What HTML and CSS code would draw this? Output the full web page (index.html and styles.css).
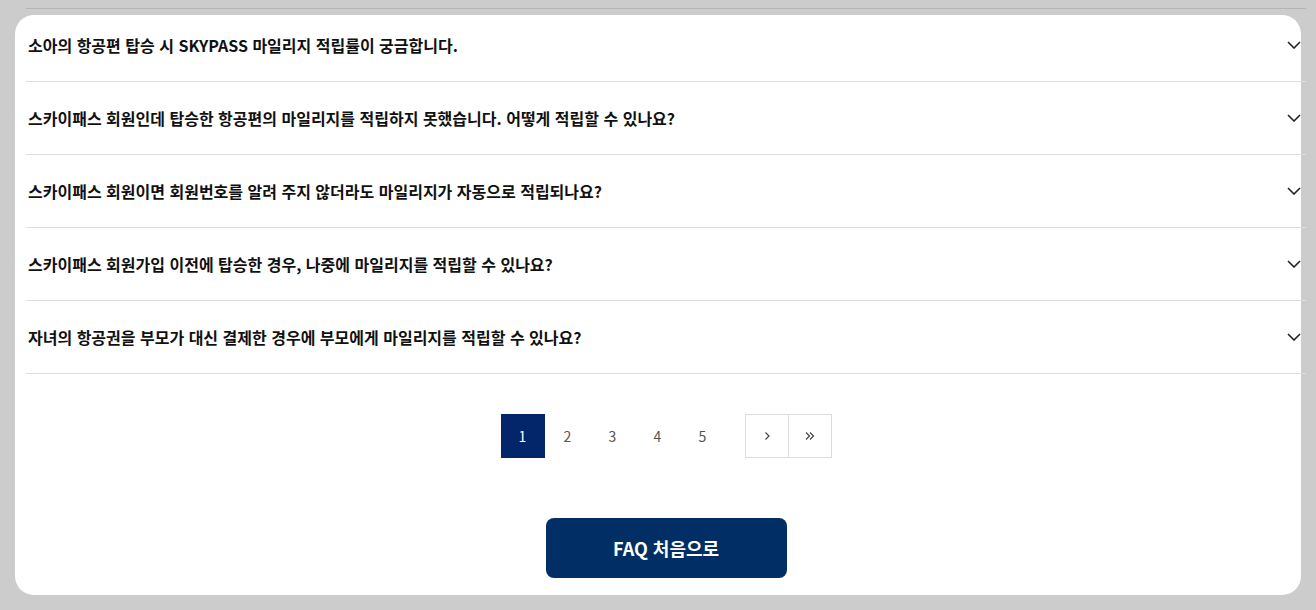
FILE: index.html
```html
<!DOCTYPE html>
<html lang="ko">
<head>
    <meta charset="UTF-8">
    <meta name="viewport" content="width=device-width, initial-scale=1.0">
    <title>자주 묻는 질문</title>
    <link rel="stylesheet" href="styles.css">
</head>
<body>
    <div class="faq-card">
        <ul class="faq-list">
            <li class="faq-item">
                <span class="question">소아의 항공편 탑승 시 SKYPASS 마일리지 적립률이 궁금합니다.</span>
                <svg class="chevron" viewBox="0 0 14 8"><path d="M1 1 L7 7 L13 1"/></svg>
            </li>
            <li class="faq-item">
                <span class="question">스카이패스 회원인데 탑승한 항공편의 마일리지를 적립하지 못했습니다. 어떻게 적립할 수 있나요?</span>
                <svg class="chevron" viewBox="0 0 14 8"><path d="M1 1 L7 7 L13 1"/></svg>
            </li>
            <li class="faq-item">
                <span class="question">스카이패스 회원이면 회원번호를 알려 주지 않더라도 마일리지가 자동으로 적립되나요?</span>
                <svg class="chevron" viewBox="0 0 14 8"><path d="M1 1 L7 7 L13 1"/></svg>
            </li>
            <li class="faq-item">
                <span class="question">스카이패스 회원가입 이전에 탑승한 경우, 나중에 마일리지를 적립할 수 있나요?</span>
                <svg class="chevron" viewBox="0 0 14 8"><path d="M1 1 L7 7 L13 1"/></svg>
            </li>
            <li class="faq-item">
                <span class="question">자녀의 항공권을 부모가 대신 결제한 경우에 부모에게 마일리지를 적립할 수 있나요?</span>
                <svg class="chevron" viewBox="0 0 14 8"><path d="M1 1 L7 7 L13 1"/></svg>
            </li>
        </ul>

        <div class="bottom">
            <div class="pagination">
                <div class="pages">
                    <a class="page active">1</a>
                    <a class="page">2</a>
                    <a class="page">3</a>
                    <a class="page">4</a>
                    <a class="page">5</a>
                </div>
                <div class="arrows">
                    <a class="arrow">
                        <svg viewBox="0 0 10 10"><path d="M3.5 1.5 L7 5 L3.5 8.5"/></svg>
                    </a>
                    <a class="arrow">
                        <svg viewBox="0 0 12 10"><path d="M2 1.5 L5.5 5 L2 8.5 M6 1.5 L9.5 5 L6 8.5"/></svg>
                    </a>
                </div>
            </div>
            <button class="home-button">FAQ 처음으로</button>
        </div>
    </div>
</body>
</html>
```

FILE: styles.css
```css
html, body {
    margin: 0;
    height: 100%;
}
body {
    background-color: #cccccc;
    padding: 15px 0 0 15px;
    box-sizing: border-box;
    font-family: "Noto Sans CJK KR", "Noto Sans", sans-serif;
    overflow: hidden;
}
.faq-card {
    display: flow-root;
    width: 1275px;
    padding: 0 0 17px 11px;
    background-color: #fff;
    border-radius: 19px;
}
.faq-list {
    list-style: none;
    margin: -7px 0 0 0;
    padding: 0;
    width: 1280px;
    border-top: 1px solid #b4b4b4;
}
.faq-item {
    display: flex;
    align-items: center;
    justify-content: space-between;
    height: 72px;
    padding: 0 5px 0 2px;
    border-bottom: 1px solid #dedede;
}
.question {
    font-size: 16px;
    font-weight: 700;
    color: #111;
}
.chevron {
    width: 14px;
    height: 8px;
    fill: none;
    stroke: #222;
    stroke-width: 1.6;
}
.bottom {
    width: 1280px;
    display: flex;
    flex-direction: column;
    align-items: center;
}
.pagination {
    display: flex;
    gap: 20px;
    margin-top: 40px;
}
.pages {
    display: flex;
    gap: 1px;
}
.page {
    width: 44px;
    height: 44px;
    display: flex;
    align-items: center;
    justify-content: center;
    font-size: 14px;
    color: #555;
    cursor: pointer;
}
.page.active {
    background-color: #022669;
    color: #fff;
}
.arrows {
    display: flex;
    border: 1px solid #dcdcdc;
}
.arrow {
    width: 42px;
    height: 42px;
    display: flex;
    align-items: center;
    justify-content: center;
    cursor: pointer;
}
.arrow + .arrow {
    border-left: 1px solid #dcdcdc;
}
.arrow svg {
    height: 10px;
    fill: none;
    stroke: #444;
    stroke-width: 1.2;
}
.arrow svg:first-child {
    width: 10px;
}
.arrow + .arrow svg {
    width: 12px;
}
.home-button {
    margin-top: 60px;
    width: 241px;
    height: 60px;
    border: none;
    border-radius: 8px;
    background-color: #012e64;
    color: #fff;
    font-family: "Noto Sans CJK KR", "Noto Sans", sans-serif;
    font-size: 18px;
    font-weight: 700;
    cursor: pointer;
}
```
